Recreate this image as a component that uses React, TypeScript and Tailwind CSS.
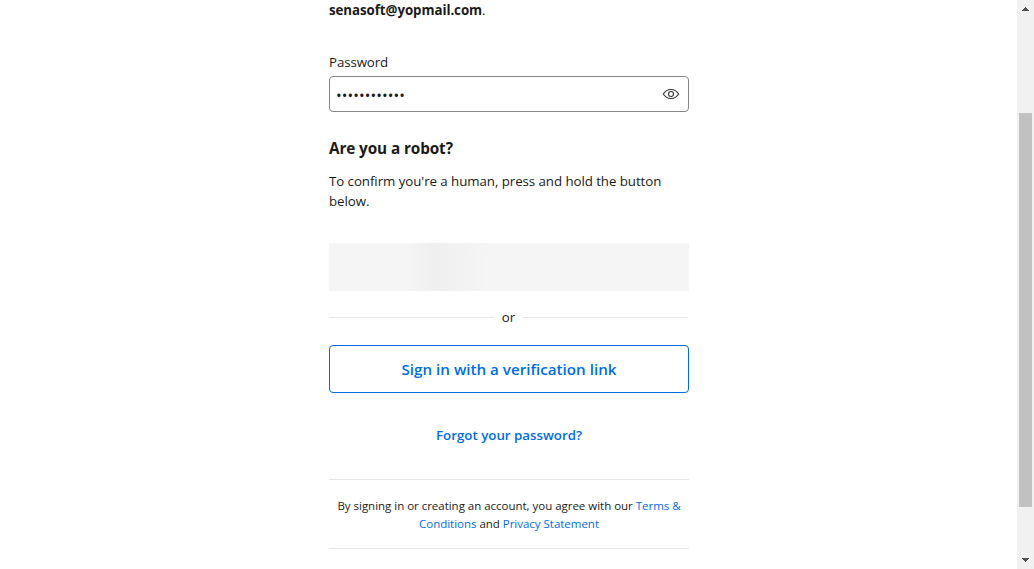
import React from "react";

function EyeIcon() {
  return (
    <svg width="18" height="18" viewBox="0 0 18 18" fill="none" stroke="#333" strokeWidth="1.1">
      <path d="M1.3 9C3.1 6.1 5.8 4.5 9 4.5S14.9 6.1 16.7 9C14.9 11.9 12.2 13.5 9 13.5S3.1 11.9 1.3 9Z" />
      <circle cx="9" cy="9" r="2.5" />
    </svg>
  );
}

function Scrollbar() {
  return (
    <div className="flex w-[17px] shrink-0 flex-col items-center bg-[#f1f1f1]">
      <div className="flex h-[17px] items-center justify-center">
        <svg width="7" height="4" viewBox="0 0 7 4" fill="#505050" shapeRendering="crispEdges">
          <path d="M3 0h1v1h1v1h1v1h1v1H0V3h1V2h1V1h1z" />
        </svg>
      </div>
      <div className="mt-24 h-[394px] w-[13px] bg-[#c1c1c1]" />
      <div className="mt-auto flex h-[17px] items-start justify-center pt-[6px]">
        <svg width="7" height="4" viewBox="0 0 7 4" fill="#505050" shapeRendering="crispEdges">
          <path d="M0 0h7v1H6v1H5v1H4v1H3V3H2V2H1V1H0z" />
        </svg>
      </div>
    </div>
  );
}

export default function App() {
  return (
    <div className="flex h-[569px] w-[1034px] overflow-hidden bg-white font-['Open_Sans','Noto_Sans',sans-serif] text-[13.3px] leading-5 text-[#1a1a1a]">
      <main className="flex min-w-0 flex-1 justify-center pl-px">
        <div className="flex w-[360px] flex-col whitespace-nowrap">
          <p className="h-5 tracking-[-0.06px]">
            <span className="font-bold">senasoft@yopmail.com</span>.
          </p>
          <label className="mt-8 h-5 font-medium tracking-[-0.1px]">Password</label>
          <div className="mt-1 flex h-9 items-center justify-between rounded-[4px] border border-[#868686] pr-2 pl-[6px]">
            <span className="pt-[2px] text-[15px] leading-5 tracking-[0.12px]">••••••••••••</span>
            <EyeIcon />
          </div>
          <h2 className="mt-6 h-6 text-[15.3px] leading-6 font-bold tracking-[-0.1px]">Are you a robot?</h2>
          <p className="mt-[11px] h-10 tracking-[-0.06px]">
            <span>To confirm you're a human, press and hold the button</span>
            <br />
            <span>below.</span>
          </p>
          <div className="mt-8 h-12 shrink-0 bg-[#f5f5f5] bg-[linear-gradient(90deg,#f5f5f5_76px,#efefef_105px,#f5f5f5_164px)]" />
          <div className="mt-4 flex h-5 items-center pr-px">
            <div className="h-px flex-1 bg-[#e7e7e7]" />
            <span className="w-[29px] text-center">or</span>
            <div className="h-px flex-1 bg-[#e7e7e7]" />
          </div>
          <button className="mt-[18px] h-12 shrink-0 rounded-[4px] border border-[#006ce4] text-[15.2px] font-semibold text-[#006ce4]">
            <span>Sign in with a verification link</span>
          </button>
          <a className="mt-8 h-5 text-center font-semibold text-[#006ce4]">Forgot your password?</a>
          <div className="mt-[34px] h-[70px] shrink-0 border-y border-[#e7e7e7] pt-[17px] text-center text-[11.5px] leading-[18px] tracking-[-0.02px]">
            <span>
              By signing in or creating an account, you agree with our <a className="text-[#006ce4]">Terms &amp;</a>
            </span>
            <br />
            <span>
              <a className="text-[#006ce4]">Conditions</a> and <a className="text-[#006ce4]">Privacy Statement</a>
            </span>
          </div>
        </div>
      </main>
      <Scrollbar />
    </div>
  );
}
